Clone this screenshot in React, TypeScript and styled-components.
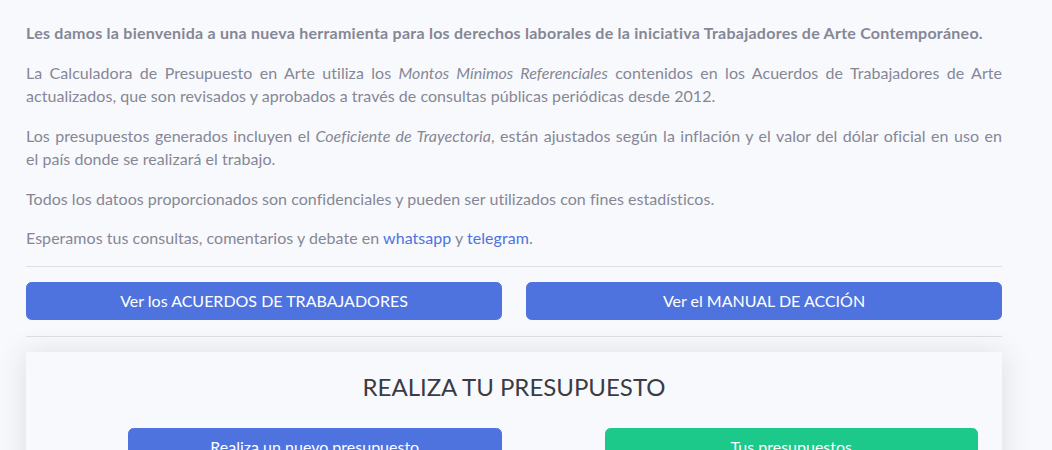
import React from "react";
import styled, { createGlobalStyle } from "styled-components";

const GlobalStyle = createGlobalStyle`
  *, *::before, *::after { box-sizing: border-box; }
  body {
    margin: 0;
    background: #f8f9fc;
    font-family: "Lato", "Noto Sans", sans-serif;
    font-size: 16px;
    line-height: 23.5px;
    color: #858796;
  }
`;

const Page = styled.main`
  width: 1002px;
  padding: 21px 0 40px 26px;
`;

const Paragraph = styled.p<{ $bold?: boolean }>`
  margin: 0 0 16px;
  text-align: justify;
  font-weight: ${(p) => (p.$bold ? 700 : 400)};
  letter-spacing: ${(p) => (p.$bold ? "0.25px" : "0.04px")};
`;

const Link = styled.a`
  color: #4e73df;
  text-decoration: none;
`;

const Rule = styled.hr`
  margin: 16px 0 15px;
  border: 0;
  border-top: 1px solid rgba(0, 0, 0, 0.1);
`;

const ButtonRow = styled.div`
  display: grid;
  grid-template-columns: 1fr 1fr;
  gap: 24px;
`;

const Button = styled.a<{ $variant?: "primary" | "success" }>`
  display: block;
  text-align: center;
  padding: 6px 12px;
  border: 1px solid ${(p) => (p.$variant === "success" ? "#1cc88a" : "#4e73df")};
  border-radius: 5.6px;
  background: ${(p) => (p.$variant === "success" ? "#1cc88a" : "#4e73df")};
  color: #fff;
  font-size: 16px;
  line-height: 24px;
  text-decoration: none;
  cursor: pointer;
`;

const Card = styled.section`
  background: #f8f9fc;
  box-shadow: 0 2.4px 28px 0 rgba(58, 59, 69, 0.15);
  padding: 21px 24px 24px 102px;
`;

const CardTitle = styled.h4`
  margin: 0 0 27px -78px;
  text-align: center;
  font-size: 24px;
  font-weight: 400;
  line-height: 1.2;
  color: #3a3b45;
`;

const CardActions = styled.div`
  display: grid;
  grid-template-columns: 1fr 1fr;
  gap: 103px;
`;

export default function App() {
  return (
    <>
      <GlobalStyle />
      <Page>
        <Paragraph $bold>
          Les damos la bienvenida a una nueva herramienta para los derechos laborales de la iniciativa Trabajadores de
          Arte Contemporáneo.
        </Paragraph>
        <Paragraph>
          La Calculadora de Presupuesto en Arte utiliza los <em>Montos Mínimos Referenciales</em> contenidos en los
          Acuerdos de Trabajadores de Arte actualizados, que son revisados y aprobados a través de consultas públicas
          periódicas desde 2012.
        </Paragraph>
        <Paragraph>
          Los presupuestos generados incluyen el <em>Coeficiente de Trayectoria</em>, están ajustados según la inflación
          y el valor del dólar oficial en uso en el{"\u00a0"}país donde se realizará el trabajo.
        </Paragraph>
        <Paragraph>
          Todos los datoos proporcionados son confidenciales y pueden ser utilizados con fines estadísticos.
        </Paragraph>
        <Paragraph>
          Esperamos tus consultas, comentarios y debate en <Link>whatsapp</Link> y <Link>telegram</Link>.
        </Paragraph>
        <Rule />
        <ButtonRow>
          <Button>Ver los ACUERDOS DE TRABAJADORES</Button>
          <Button>Ver el MANUAL DE ACCIÓN</Button>
        </ButtonRow>
        <Rule />
        <Card>
          <CardTitle>REALIZA TU PRESUPUESTO</CardTitle>
          <CardActions>
            <Button>Realiza un nuevo presupuesto</Button>
            <Button $variant="success">Tus presupuestos</Button>
          </CardActions>
        </Card>
      </Page>
    </>
  );
}
